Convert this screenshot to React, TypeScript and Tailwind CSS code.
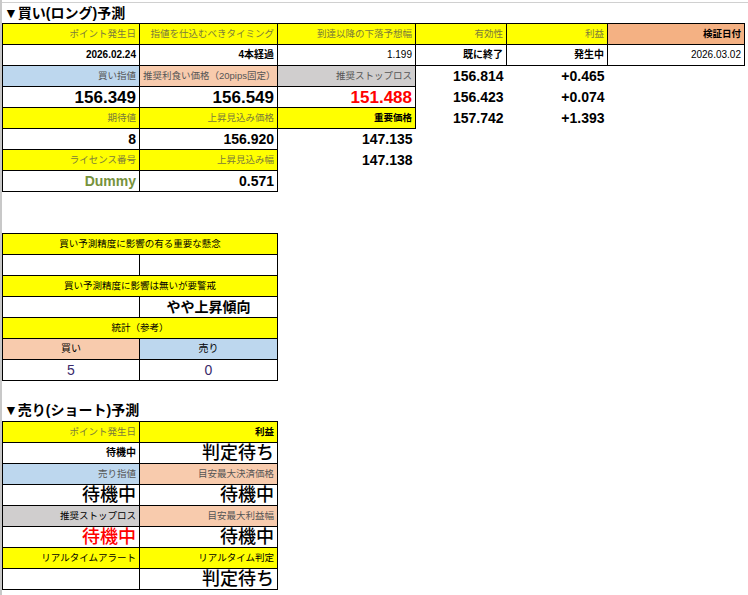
import React from "react";

const Y = "bg-[#ffff00]";
const BL = "bg-[#bdd7ee]";
const PE = "bg-[#f8cbad]";
const GR = "bg-[#d0cece]";
const SA = "bg-[#f4b183]";
const LBL = "text-[9.5px] text-[#7b7b3b]";
const LBLK = "text-[9.5px] text-black font-bold";

type C = { t?: React.ReactNode; c?: string; b?: boolean; span?: number };
const cell = (x: C, i: number) => (
  <td
    key={i}
    colSpan={x.span}
    className={`h-[21px] p-0 px-[3px] text-right whitespace-nowrap overflow-hidden leading-none ${x.b === false ? "" : "border border-black"} ${x.c ?? ""}`}
  >
    {x.t}
  </td>
);

function Table({ widths, rows }: { widths: number[]; rows: C[][] }) {
  return (
    <table className="border-collapse table-fixed" style={{ width: widths.reduce((a, b) => a + b, 0) }}>
      <colgroup>
        {widths.map((w, i) => (
          <col key={i} style={{ width: w }} />
        ))}
      </colgroup>
      <tbody>{rows.map((r, i) => <tr key={i}>{r.map(cell)}</tr>)}</tbody>
    </table>
  );
}

const big = "text-[17px] font-bold";
const mid = "text-[14px] font-bold";
const sml = "text-[10px] font-bold";
const kj = "text-[18px] font-medium";

export default function App() {
  return (
    <div
      className="w-[748px] h-[595px] bg-white border-l-2 border-[#c8c8c8] overflow-hidden text-black"
      style={{ fontFamily: '"Liberation Sans", "Noto Sans CJK JP", sans-serif' }}
    >
      <div className="h-[3px] border-b border-[#d0d0d0]" />
      <div className="h-[20px] pl-[2px] text-[14px] font-bold leading-[20px]">▼買い(ロング)予測</div>
      <Table
        widths={[137, 138, 138, 91, 101, 137]}
        rows={[
          [
            { t: "ポイント発生日", c: `${Y} ${LBL}` },
            { t: "指値を仕込むべきタイミング", c: `${Y} ${LBL}` },
            { t: "到達以降の下落予想幅", c: `${Y} ${LBL}` },
            { t: "有効性", c: `${Y} ${LBL}` },
            { t: "利益", c: `${Y} ${LBL}` },
            { t: "検証日付", c: `${SA} ${LBLK}` },
          ],
          [
            { t: "2026.02.24", c: sml },
            { t: "4本経過", c: sml },
            { t: "1.199", c: "text-[10px]" },
            { t: "既に終了", c: sml },
            { t: "発生中", c: sml },
            { t: "2026.03.02", c: "text-[10px]" },
          ],
          [
            { t: "買い指値", c: `${BL} ${LBL} !text-[#555]` },
            { t: "推奨利食い価格（20pips固定）", c: `${PE} ${LBL} !text-[#555]` },
            { t: "推奨ストップロス", c: `${GR} ${LBL} !text-[#555]` },
            { t: "156.814", c: mid, b: false },
            { t: "+0.465", c: mid, b: false },
            { t: "", b: false },
          ],
          [
            { t: "156.349", c: big },
            { t: "156.549", c: big },
            { t: "151.488", c: `${big} text-[#ff0000]` },
            { t: "156.423", c: mid, b: false },
            { t: "+0.074", c: mid, b: false },
            { t: "", b: false },
          ],
          [
            { t: "期待値", c: `${Y} ${LBL}` },
            { t: "上昇見込み価格", c: `${Y} ${LBL}` },
            { t: "重要価格", c: `${Y} ${LBLK}` },
            { t: "157.742", c: mid, b: false },
            { t: "+1.393", c: mid, b: false },
            { t: "", b: false },
          ],
          [
            { t: "8", c: mid },
            { t: "156.920", c: mid },
            { t: "147.135", c: mid, b: false },
            { t: "", b: false },
            { t: "", b: false },
            { t: "", b: false },
          ],
          [
            { t: "ライセンス番号", c: `${Y} ${LBL}` },
            { t: "上昇見込み幅", c: `${Y} ${LBL}` },
            { t: "147.138", c: mid, b: false },
            { t: "", b: false },
            { t: "", b: false },
            { t: "", b: false },
          ],
          [
            { t: "Dummy", c: `${mid} text-[#76923c]` },
            { t: "0.571", c: mid },
            { t: "", b: false },
            { t: "", b: false },
            { t: "", b: false },
            { t: "", b: false },
          ],
        ]}
      />
      <div className="h-[41px]" />
      <Table
        widths={[137, 138]}
        rows={[
          [{ t: "買い予測精度に影響の有る重要な懸念", span: 2, c: `${Y} ${LBLK} font-normal !text-center` }],
          [{ t: "" }, { t: "" }],
          [{ t: "買い予測精度に影響は無いが要警戒", span: 2, c: `${Y} ${LBLK} font-normal !text-center` }],
          [{ t: "" }, { t: "やや上昇傾向", c: `${mid} !text-center` }],
          [{ t: "統計（参考）", span: 2, c: `${Y} ${LBLK} font-normal !text-center` }],
          [
            { t: "買い", c: `${PE} text-[10px] !text-center` },
            { t: "売り", c: `${BL} text-[10px] !text-center` },
          ],
          [
            { t: "5", c: "text-[14px] text-[#3a2a6a] !text-center" },
            { t: "0", c: "text-[14px] text-[#3a2a6a] !text-center" },
          ],
        ]}
      />
      <div className="h-[19px]" />
      <div className="h-[21px] pl-[2px] text-[14px] font-bold leading-[21px]">▼売り(ショート)予測</div>
      <Table
        widths={[137, 138]}
        rows={[
          [
            { t: "ポイント発生日", c: `${Y} ${LBL}` },
            { t: "利益", c: `${Y} ${LBLK}` },
          ],
          [
            { t: "待機中", c: sml },
            { t: "判定待ち", c: kj },
          ],
          [
            { t: "売り指値", c: `${BL} ${LBL} !text-[#555]` },
            { t: "目安最大決済価格", c: `${PE} ${LBL} !text-[#555]` },
          ],
          [
            { t: "待機中", c: kj },
            { t: "待機中", c: kj },
          ],
          [
            { t: "推奨ストップロス", c: `${GR} ${LBLK} font-normal` },
            { t: "目安最大利益幅", c: `${PE} ${LBL} !text-[#555]` },
          ],
          [
            { t: "待機中", c: `${kj} text-[#ff0000]` },
            { t: "待機中", c: kj },
          ],
          [
            { t: "リアルタイムアラート", c: `${Y} ${LBLK} font-normal` },
            { t: "リアルタイム判定", c: `${Y} ${LBLK} font-normal` },
          ],
          [{ t: "" }, { t: "判定待ち", c: kj }],
        ]}
      />
    </div>
  );
}
